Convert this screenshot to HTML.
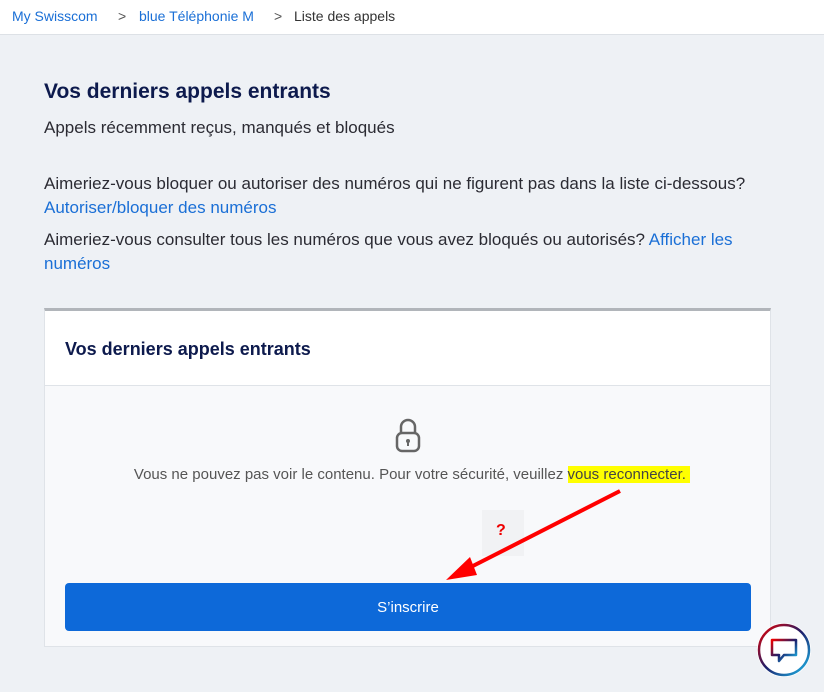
<!DOCTYPE html>
<html><head><meta charset="utf-8"><style>
body{margin:0;width:824px;height:692px;background:#eef1f5;font-family:"Liberation Sans",sans-serif;position:relative;overflow:hidden;color:#1b1b2b}
.top{position:absolute;left:0;top:0;width:824px;height:34px;background:#fff;border-bottom:1px solid #dde1e6;font-size:14px}
.top span{position:absolute;top:8px}
a{color:#1a6fd6;text-decoration:none}
.h1{position:absolute;left:44px;top:80px;font-size:21px;font-weight:bold;color:#0d1a4d}
.p{position:absolute;left:44px;font-size:17px;color:#2b2b33}
.card{position:absolute;left:44px;top:308px;width:727px;height:339px;background:#f8f9fb;border:1px solid #dfe3e8;border-top:3px solid #b1b5ba;box-sizing:border-box}
.ch{height:75px;background:#fff;border-bottom:1px solid #dfe3e8;font-size:18px;font-weight:bold;color:#0d1a4d;padding:28px 0 0 20px;box-sizing:border-box}
.btn{position:absolute;left:65px;top:583px;width:686px;height:48px;background:#0d69d9;border-radius:4px;color:#fff;font-size:15px;text-align:center;line-height:50px}
</style></head><body>
<div class="top"><span style="left:12px"><a>My Swisscom</a></span><span style="left:118px;color:#555">&gt;</span><span style="left:139px"><a>blue Téléphonie M</a></span><span style="left:274px;color:#555">&gt;</span><span style="left:294px;color:#333">Liste des appels</span></div>
<div class="h1">Vos derniers appels entrants</div>
<div class="p" style="top:118px">Appels récemment reçus, manqués et bloqués</div>
<div class="p" style="top:174px">Aimeriez-vous bloquer ou autoriser des numéros qui ne figurent pas dans la liste ci-dessous?</div>
<div class="p" style="top:198px"><a>Autoriser/bloquer des numéros</a></div>
<div class="p" style="top:230px">Aimeriez-vous consulter tous les numéros que vous avez bloqués ou autorisés? <a>Afficher les</a></div>
<div class="p" style="top:254px"><a>numéros</a></div>
<div class="card"><div class="ch">Vos derniers appels entrants</div></div>
<svg style="position:absolute;left:394px;top:418px" width="28" height="36" viewBox="0 0 28 36"><path d="M7 15V9a7 7 0 0 1 14 0v6" fill="none" stroke="#666" stroke-width="2.5"/><rect x="3" y="15" width="22" height="18" rx="5" fill="none" stroke="#666" stroke-width="2.5"/><circle cx="14" cy="23" r="2" fill="#666"/><rect x="13" y="23" width="2" height="5" fill="#666"/></svg>
<div style="position:absolute;left:0;width:824px;top:466px;text-align:center;font-size:15px;color:#555">Vous ne pouvez pas voir le contenu. Pour votre sécurité, veuillez <span style="background:#ffff00;color:#444">vous reconnecter.&nbsp;</span></div>
<div style="position:absolute;left:482px;top:510px;width:42px;height:46px;background:#f1f2f4"></div>
<div style="position:absolute;left:496px;top:522px;color:#e00;font-weight:bold;font-size:16px">?</div>
<div class="btn">S’inscrire</div>
<svg style="position:absolute;left:0;top:0" width="824" height="692"><line x1="620" y1="491" x2="465" y2="570" stroke="#f00" stroke-width="4"/><polygon points="446,580 470,557 477,575" fill="#f00"/></svg>
<svg style="position:absolute;left:756px;top:622px" width="56" height="56" viewBox="0 0 56 56"><defs><linearGradient id="g" x1="0" y1="0" x2="1" y2="1"><stop offset="0" stop-color="#e00"/><stop offset=".5" stop-color="#1b1f6b"/><stop offset="1" stop-color="#1ec0f0"/></linearGradient></defs><circle cx="28" cy="28" r="27" fill="#fff"/><circle cx="28" cy="28" r="25" fill="none" stroke="url(#g)" stroke-width="2.5"/><path d="M16 18h24v15H28l-5 6v-6h-7z" fill="none" stroke="url(#g)" stroke-width="2.5" stroke-linejoin="round"/></svg>
</body></html>
